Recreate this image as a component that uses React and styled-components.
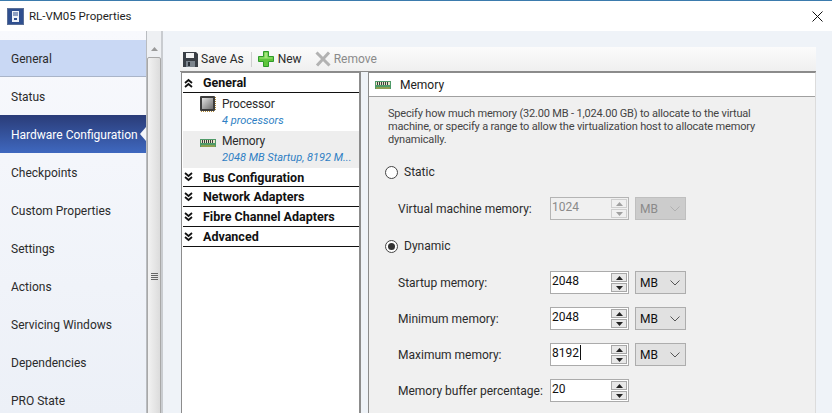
import React from 'react';
import styled, { createGlobalStyle } from 'styled-components';

const GlobalStyle = createGlobalStyle`
  html, body {
    margin: 0;
    padding: 0;
    background: #fff;
  }

  body {
    font-family: Roboto, "Open Sans", "Liberation Sans", sans-serif;
    color: #222;
  }
`;

const Window = styled.div`
  display: flex;
  flex-direction: column;
  width: 832px;
  height: 413px;
  overflow: hidden;
`;

const TitleBar = styled.div`
  display: flex;
  flex: none;
  align-items: center;
  gap: 5px;
  box-sizing: border-box;
  height: 31px;
  padding: 0 9px 0 7px;
  background: #fff;
  border-top: 1px solid #3b7bad;
  font-size: 11.5px;
`;

const TitleText = styled.span`
  flex: 1;
  color: #1f1f1f;
`;

const Body = styled.div`
  display: flex;
  flex: 1;
  min-height: 0;
  background: #eff3f8;
`;

const Sidebar = styled.nav`
  flex: none;
  width: 146px;
  padding-top: 9px;
  background: linear-gradient(#f8f9fd, #ecf0f7);
`;

const SideItem = styled.div`
  position: relative;
  display: flex;
  align-items: center;
  box-sizing: border-box;
  height: ${p => (p.$hover ? 37 : 38)}px;
  padding: 2px 0 0 11px;
  font-size: 12px;
  white-space: nowrap;
  color: ${p => (p.$active ? '#fff' : '#2b2b2b')};
  background: ${p =>
    p.$active
      ? 'linear-gradient(#2a3c78, #3f68bf)'
      : p.$hover
        ? '#c9d8f4'
        : 'transparent'};
  border-bottom: ${p => (p.$hover ? '1px solid #a9b4c8' : '0')};
`;

const ActiveNotch = styled.span`
  position: absolute;
  right: 0;
  top: 12px;
  border: 7px solid transparent;
  border-right: 6px solid #f4f6fa;
  border-left-width: 0;
`;

const ScrollBar = styled.div`
  display: flex;
  flex: none;
  flex-direction: column;
  align-items: center;
  width: 14px;
  padding-top: 9px;
  background: #eef0f3;
  border-left: 1px solid #b9bcc0;
  border-right: 2px solid #c9ccd0;
`;

const ScrollArrow = styled.div`
  display: flex;
  flex: none;
  align-items: center;
  justify-content: center;
  height: 17px;
  width: 100%;
`;

const ScrollThumb = styled.div`
  display: flex;
  flex: none;
  flex-direction: column;
  align-items: center;
  justify-content: center;
  gap: 1px;
  box-sizing: border-box;
  width: 14px;
  height: 438px;
  background: linear-gradient(90deg, #f2f2f2, #dcdcdc);
  border: 1px solid #a8a8a8;
  border-radius: 2px;

  i {
    display: block;
    width: 7px;
    height: 1px;
    background: #666;
  }
`;

const Content = styled.main`
  display: flex;
  flex: 1;
  flex-direction: column;
  min-width: 0;
  padding: 16px 16px 0 17px;
`;

const Toolbar = styled.div`
  display: flex;
  flex: none;
  align-items: center;
  box-sizing: border-box;
  height: 25px;
  padding-left: 3px;
  background: linear-gradient(#fbfbfb, #efefef);
  font-size: 12px;
  border-bottom: 1px solid #8a8a8a;
`;

const ToolButton = styled.div`
  display: flex;
  align-items: center;
  gap: ${p => p.$gap || 3}px;
  margin-right: ${p => p.$mr || 0}px;
  color: ${p => (p.$disabled ? '#8a8a8a' : '#2b2b2b')};
`;

const ToolSep = styled.span`
  width: 1px;
  height: 15px;
  margin: 0 6px 0 7px;
  background: #cfcfcf;
`;

const Panels = styled.div`
  display: flex;
  flex: 1;
  gap: 7px;
  min-height: 0;
`;

const Tree = styled.section`
  flex: none;
  box-sizing: border-box;
  width: 180px;
  padding-left: 1px;
  background: #fff;
  border: 1px solid #8c8c8c;
  border-width: 1px 2px 0 1px;
  margin-left: 1px;
`;

const TreeHeader = styled.div`
  display: flex;
  align-items: center;
  box-sizing: border-box;
  height: ${p => p.$h}px;
  padding-left: 1px;
  gap: 10px;
  color: #111;
  font-size: 12.5px;
  font-weight: 700;
  border-bottom: 1px solid #111;
`;

const TreeItem = styled.div`
  display: flex;
  box-sizing: border-box;
  height: ${p => p.$h}px;
  padding: ${p => p.$pt}px 0 0 17px;
  gap: 6px;
  background: ${p => (p.$selected ? '#eeeeee' : 'transparent')};
`;

const TreeIcon = styled.div`
  display: flex;
  flex: none;
  align-items: center;
  justify-content: center;
  width: 16px;
  height: ${p => p.$h}px;
`;

const TreeText = styled.div`
  min-width: 0;
  font-size: 12px;
  line-height: 17px;
  letter-spacing: -0.2px;
  color: #2b2b2b;
`;

const TreeSub = styled.div`
  width: 134px;
  font-size: 11px;
  line-height: 16px;
  font-style: italic;
  letter-spacing: 0;
  color: #2f7fc4;
  white-space: nowrap;
`;

const Detail = styled.section`
  display: flex;
  flex: 1;
  flex-direction: column;
  min-width: 0;
  background: #f0f0f0;
  border: 1px solid #8c8c8c;
  border-width: 1px 1px 0 1px;
  border-right-color: #dcdcdc;
`;

const DetailHeader = styled.header`
  display: flex;
  flex: none;
  align-items: center;
  gap: 9px;
  box-sizing: border-box;
  height: 24px;
  padding-left: 6px;
  background: #fff;
  font-size: 12px;
  border-bottom: 1px solid #a0a0a0;
`;

const Form = styled.div`
  padding: 10px 0 0 16px;
`;

const Description = styled.p`
  width: 372px;
  margin: 0 0 0 3px;
  font-size: 11px;
  line-height: 13px;
  letter-spacing: -0.17px;
  color: #444;
`;

const RadioRow = styled.div`
  display: flex;
  align-items: center;
  gap: 6px;
  height: 16px;
  margin-top: ${p => p.$mt}px;
  font-size: 12px;
  color: #2b2b2b;
`;

const RadioDot = styled.span`
  display: flex;
  align-items: center;
  justify-content: center;
  box-sizing: border-box;
  width: 13px;
  height: 13px;
  background: #fff;
  border: 1px solid #444;
  border-radius: 50%;

  &::after {
    content: '';
    display: ${p => (p.$on ? 'block' : 'none')};
    width: 7px;
    height: 7px;
    background: #333;
    border-radius: 50%;
  }
`;

const FieldRow = styled.div`
  display: flex;
  align-items: center;
  height: 23px;
  margin: ${p => p.$mt}px 0 0 13px;
`;

const FieldLabel = styled.label`
  flex: none;
  width: 152px;
  font-size: 12px;
  color: #2b2b2b;
  white-space: nowrap;
`;

const SpinBox = styled.div`
  display: flex;
  flex: none;
  box-sizing: border-box;
  width: 79px;
  height: 23px;
  background: ${p => (p.$disabled ? '#f0f0f0' : '#fff')};
  border: 1px solid ${p => (p.$disabled ? '#b4b4b4' : '#ababab')};
`;

const SpinValue = styled.div`
  flex: 1;
  padding: 1px 0 0 1px;
  font-size: 12px;
  line-height: 16px;
  color: ${p => (p.$disabled ? '#8a8a8a' : '#111')};
`;

const Caret = styled.span`
  display: inline-block;
  width: 1px;
  height: 15px;
  margin-left: 1px;
  vertical-align: top;
  background: #111;
`;

const SpinButtons = styled.div`
  display: flex;
  flex-direction: column;
  gap: 1px;
  width: 16px;
  padding: 1px 1px 1px 0;
`;

const SpinButton = styled.div`
  display: flex;
  flex: 1;
  align-items: center;
  justify-content: center;
  background: ${p => (p.$disabled ? '#f0f0f0' : '#e8e8e8')};
  border: 1px solid ${p => (p.$disabled ? '#cfcfcf' : '#a8a8a8')};
`;

const Select = styled.div`
  display: flex;
  flex: none;
  align-items: center;
  justify-content: space-between;
  box-sizing: border-box;
  width: 51px;
  height: 23px;
  margin-left: 6px;
  padding: 0 5px 0 4px;
  font-size: 12px;
  color: ${p => (p.$disabled ? '#8a8a8a' : '#111')};
  background: ${p => (p.$disabled ? '#cccccc' : '#e1e1e1')};
  border: 1px solid ${p => (p.$disabled ? '#bfbfbf' : '#adadad')};
`;

const WindowIcon = () => (
  <svg width="17" height="17" viewBox="0 0 17 17">
    <rect x="0.5" y="0.5" width="16" height="16" fill="#2f4f8f" stroke="#5a6f96" />
    <rect x="5" y="3" width="7" height="11" fill="#eef2f8" />
    <path d="M6 5h5M6 7h5" stroke="#2f4f8f" />
    <rect x="7" y="10" width="3" height="2" fill="#2f4f8f" />
  </svg>
);

const CloseIcon = () => (
  <svg width="11" height="11" viewBox="0 0 11 11">
    <path d="M0.5 0.5l10 10M10.5 0.5l-10 10" stroke="#111" fill="none" />
  </svg>
);

const DiskIcon = () => (
  <svg width="15" height="15" viewBox="0 0 15 15">
    <path d="M0 0h13l2 2v13H0z" fill="#3a3f45" />
    <rect x="3" y="1" width="8" height="5" fill="#f4f4f4" />
    <rect x="3" y="9" width="9" height="6" fill="#7d858d" />
    <rect x="5" y="10" width="2" height="4" fill="#2d3136" />
  </svg>
);

const PlusIcon = () => (
  <svg width="16" height="16" viewBox="0 0 16 16">
    <path d="M5.5 .5h5v5h5v5h-5v5h-5v-5h-5v-5h5z" fill="#5fc63c" stroke="#2f9a2a" />
    <path d="M6.5 1.5h3v5h5v1h-13v-1h5z" fill="#a4e67c" />
  </svg>
);

const RemoveIcon = () => (
  <svg width="16" height="16" viewBox="0 0 16 16">
    <path d="M1.5 1.5l13 13M14 1.5L2 14.5" stroke="#b2b2b2" strokeWidth="3" fill="none" />
  </svg>
);

const ChipIcon = () => (
  <svg width="16" height="16" viewBox="0 0 16 16">
    <defs>
      <linearGradient id="chipFace" x1="0" y1="0" x2="1" y2="1">
        <stop offset="0" stopColor="#e2e2e2" />
        <stop offset="1" stopColor="#6e6e6e" />
      </linearGradient>
    </defs>
    <rect x="0" y="0" width="15" height="15" rx="1" fill="#3d3d3d" />
    <rect x="2" y="2" width="11" height="11" fill="url(#chipFace)" />
    <path d="M1 15.5h14M15.5 1v14" stroke="#b08a3a" strokeDasharray="1 1" />
  </svg>
);

const RamIcon = () => (
  <svg width="16" height="8" viewBox="0 0 16 8">
    <rect width="16" height="8" fill="#4f9a68" />
    <rect x="1" y="1" width="14" height="3" fill="#e8e4c8" />
    <path d="M2.5 1v3M4.5 1v3M6.5 1v3M8.5 1v3M10.5 1v3M12.5 1v3" stroke="#3c3c3c" />
    <path d="M1 7h14" stroke="#c9a53a" />
  </svg>
);

const Chevrons = ({ up }) => (
  <svg width="9" height="10" viewBox="0 0 9 10">
    <g transform={up ? 'rotate(180 4.5 5)' : undefined} fill="none" stroke="#111" strokeWidth="1.8">
      <path d="M1 1l3.5 3 3.5-3" />
      <path d="M1 5l3.5 3 3.5-3" />
    </g>
  </svg>
);

const SpinArrow = ({ up, disabled }) => (
  <svg width="7" height="4" viewBox="0 0 7 4">
    <path d={up ? 'M3.5 0L7 4H0z' : 'M0 0h7L3.5 4z'} fill={disabled ? '#a0a0a0' : '#222'} />
  </svg>
);

const SelectChevron = ({ disabled }) => (
  <svg width="10" height="6" viewBox="0 0 10 6">
    <path d="M0.5 0.5L5 5l4.5-4.5" fill="none" stroke={disabled ? '#b0b0b0' : '#555'} />
  </svg>
);

const sideItems = [
  'General',
  'Status',
  'Hardware Configuration',
  'Checkpoints',
  'Custom Properties',
  'Settings',
  'Actions',
  'Servicing Windows',
  'Dependencies',
  'PRO State',
];

const SpinField = ({ value, disabled, caret }) => (
  <SpinBox $disabled={disabled}>
    <SpinValue $disabled={disabled}>
      {value}
      {caret && <Caret />}
    </SpinValue>
    <SpinButtons>
      <SpinButton $disabled={disabled}>
        <SpinArrow up disabled={disabled} />
      </SpinButton>
      <SpinButton $disabled={disabled}>
        <SpinArrow disabled={disabled} />
      </SpinButton>
    </SpinButtons>
  </SpinBox>
);

const MemoryRow = ({ label, value, mt, disabled, caret, noUnit }) => (
  <FieldRow $mt={mt}>
    <FieldLabel>{label}</FieldLabel>
    <SpinField value={value} disabled={disabled} caret={caret} />
    {!noUnit && (
      <Select $disabled={disabled}>
        MB
        <SelectChevron disabled={disabled} />
      </Select>
    )}
  </FieldRow>
);

const App = () => (
  <Window>
    <GlobalStyle />
    <TitleBar>
      <WindowIcon />
      <TitleText>RL-VM05 Properties</TitleText>
      <CloseIcon />
    </TitleBar>
    <Body>
      <Sidebar>
        {sideItems.map((item, i) => (
          <SideItem key={item} $hover={i === 0} $active={i === 2}>
            {item}
            {i === 2 && <ActiveNotch />}
          </SideItem>
        ))}
      </Sidebar>
      <ScrollBar>
        <ScrollArrow>
          <svg width="7" height="4" viewBox="0 0 7 4">
            <path d="M3.5 0L7 4H0z" fill="#9a9a9a" />
          </svg>
        </ScrollArrow>
        <ScrollThumb>
          <i />
          <i />
          <i />
          <i />
        </ScrollThumb>
      </ScrollBar>
      <Content>
        <Toolbar>
          <ToolButton>
            <DiskIcon />
            Save As
          </ToolButton>
          <ToolSep />
          <ToolButton $mr={13} $gap={4}>
            <PlusIcon />
            New
          </ToolButton>
          <ToolButton $disabled>
            <RemoveIcon />
            Remove
          </ToolButton>
        </Toolbar>
        <Panels>
          <Tree>
            <TreeHeader $h={20}>
              <Chevrons up />
              General
            </TreeHeader>
            <TreeItem $h={38} $pt={3}>
              <TreeIcon $h={16}>
                <ChipIcon />
              </TreeIcon>
              <TreeText>
                Processor
                <TreeSub>4 processors</TreeSub>
              </TreeText>
            </TreeItem>
            <TreeItem $h={37} $pt={2} $selected>
              <TreeIcon $h={20}>
                <RamIcon />
              </TreeIcon>
              <TreeText>
                Memory
                <TreeSub>2048 MB Startup, 8192 M...</TreeSub>
              </TreeText>
            </TreeItem>
            <TreeHeader $h={19}>
              <Chevrons />
              Bus Configuration
            </TreeHeader>
            <TreeHeader $h={20}>
              <Chevrons />
              Network Adapters
            </TreeHeader>
            <TreeHeader $h={20}>
              <Chevrons />
              Fibre Channel Adapters
            </TreeHeader>
            <TreeHeader $h={20}>
              <Chevrons />
              Advanced
            </TreeHeader>
          </Tree>
          <Detail>
            <DetailHeader>
              <RamIcon />
              Memory
            </DetailHeader>
            <Form>
              <Description>
                Specify how much memory (32.00 MB - 1,024.00 GB) to allocate to the virtual
                machine, or specify a range to allow the virtualization host to allocate memory
                dynamically.
              </Description>
              <RadioRow $mt={18}>
                <RadioDot />
                Static
              </RadioRow>
              <MemoryRow label="Virtual machine memory:" value="1024" mt={17} disabled />
              <RadioRow $mt={18}>
                <RadioDot $on />
                Dynamic
              </RadioRow>
              <MemoryRow label="Startup memory:" value="2048" mt={17} />
              <MemoryRow label="Minimum memory:" value="2048" mt={13} />
              <MemoryRow label="Maximum memory:" value="8192" mt={13} caret />
              <MemoryRow label="Memory buffer percentage:" value="20" mt={13} noUnit />
            </Form>
          </Detail>
        </Panels>
      </Content>
    </Body>
  </Window>
);

export default App;
